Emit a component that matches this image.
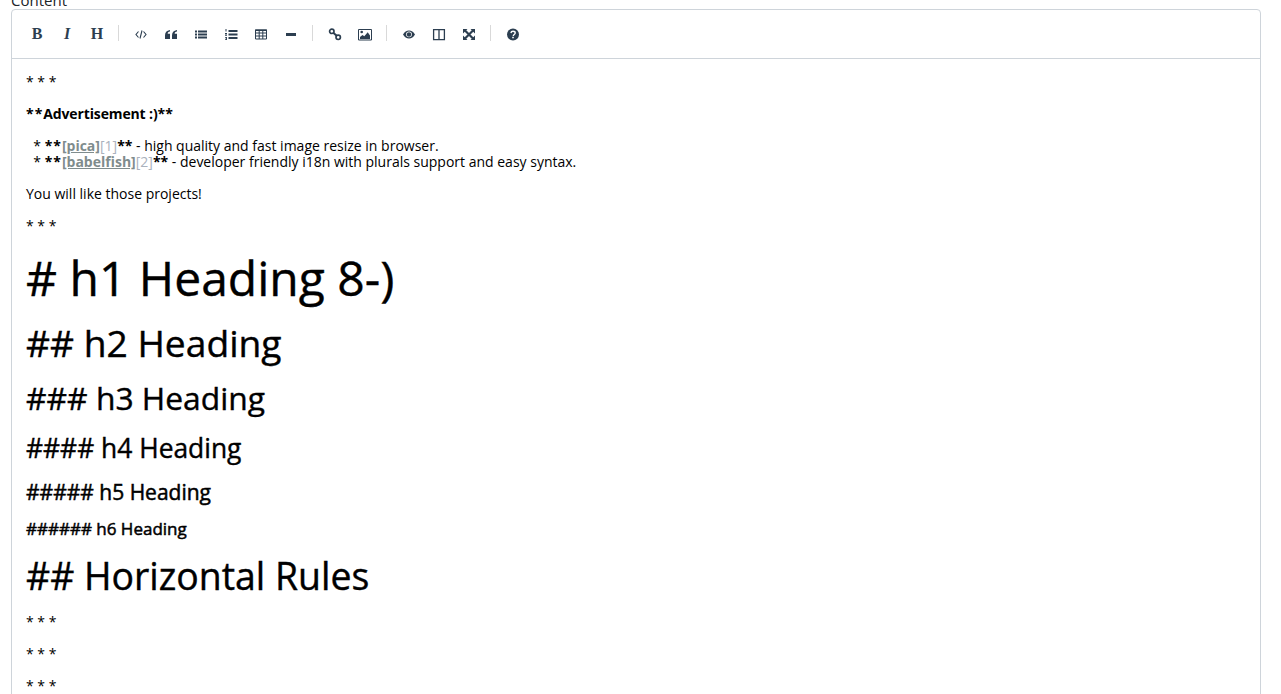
<div class="page">
  <label class="label" for="content">Content</label>
  <div class="editor" id="content">
    <div class="toolbar">
      <span class="btn serif">B</span>
      <span class="btn serif italic">I</span>
      <span class="btn serif">H</span>
      <i class="sep"></i>
      <span class="btn">
        <svg width="14" height="14" viewBox="0 0 14 14"><path d="M4.500 4.500 2 7.500l2.500 3M9.500 4.500l2.500 3-2.500 3M8 3.500 6 11.500" fill="none" stroke="#2c3e50" stroke-width="1.100"/></svg>
      </span>
      <span class="btn">
        <svg width="14" height="14" viewBox="0 0 14 14"><path d="M1 8.500C1 5.500 2.500 3.500 6 3v1.600C4.300 4.900 3.700 5.600 3.700 6.700H6V12H1zM8 8.500C8 5.500 9.500 3.500 13 3v1.600C11.300 4.900 10.700 5.600 10.700 6.700H13V12H8z" fill="#2c3e50"/></svg>
      </span>
      <span class="btn">
        <svg width="14" height="14" viewBox="0 0 14 14"><path d="M1 3.500h2v2H1zM1 6.500h2v2H1zM1 9.500h2v2H1zM4 3.500h9v2H4zM4 6.500h9v2H4zM4 9.500h9v2H4z" fill="#2c3e50"/></svg>
      </span>
      <span class="btn">
        <svg width="14" height="14" viewBox="0 0 14 14"><path d="M1.500 2h1v2.500h-1zM1 6h2v1L2 8h1v.8H1V8l1-1H1zM1 10h2v3H1v-.7h1.200v-.5H1.500v-.6h.7v-.5H1zM4.500 3h9v2h-9zM4.500 6.500h9v2h-9zM4.500 10h9v2h-9z" fill="#2c3e50"/></svg>
      </span>
      <span class="btn">
        <svg width="14" height="14" viewBox="0 0 14 14"><path d="M1.500 3h11v9h-11zM1.500 6h11M1.500 9h11M5.200 3v9M8.800 3v9" fill="none" stroke="#2c3e50" stroke-width="1"/><path d="M1 2.500h12v1.500H1z" fill="#2c3e50"/></svg>
      </span>
      <span class="btn">
        <svg width="14" height="14" viewBox="0 0 14 14"><path d="M2 6h10v3H2z" fill="#2c3e50"/></svg>
      </span>
      <i class="sep"></i>
      <span class="btn">
        <svg width="14" height="14" viewBox="0 0 14 14"><circle cx="3.800" cy="4.300" r="2.200" fill="none" stroke="#2c3e50" stroke-width="1.700"/><circle cx="10.200" cy="10.300" r="2.200" fill="none" stroke="#2c3e50" stroke-width="1.700"/><path d="M5.300 5.800 8.700 8.800" stroke="#2c3e50" stroke-width="2"/></svg>
      </span>
      <span class="btn">
        <svg width="14" height="14" viewBox="0 0 14 14"><path d="M.5 2.500h13v10.500H.5z" fill="none" stroke="#2c3e50" stroke-width="1"/><path d="M2 12v-2l2.500-2 1.800 1.300 3.400-4L12 8.500V12z" fill="#2c3e50"/><circle cx="3.700" cy="5" r="1.300" fill="#2c3e50"/></svg>
      </span>
      <i class="sep"></i>
      <span class="btn">
        <svg width="14" height="14" viewBox="0 0 14 14"><path d="M1 7.500C2.500 5 4.500 3.500 7 3.500s4.500 1.500 6 4C11.500 10 9.500 11.500 7 11.500S2.500 10 1 7.500z" fill="#2c3e50"/><circle cx="7" cy="7.300" r="2.900" fill="#fff"/><circle cx="7" cy="7.500" r="2.200" fill="#2c3e50"/></svg>
      </span>
      <span class="btn">
        <svg width="14" height="14" viewBox="0 0 14 14"><path d="M1.600 2.600h10.800v10H1.600zM7 2.600v10" fill="none" stroke="#2c3e50" stroke-width="1.300"/></svg>
      </span>
      <span class="btn">
        <svg width="14" height="14" viewBox="0 0 14 14"><path d="M3 3.500l8 8M11 3.500l-8 8" stroke="#2c3e50" stroke-width="2.200"/><path d="M1 2h4.500L1 6.500zM13 2v4.500L8.500 2zM1 13V8.500L5.500 13zM13 13H8.500L13 8.500z" fill="#2c3e50"/></svg>
      </span>
      <i class="sep"></i>
      <span class="btn">
        <svg width="14" height="14" viewBox="0 0 14 14"><circle cx="7" cy="7.500" r="6" fill="#2c3e50"/><path d="M4.900 6c.2-1.100 1-1.700 2.100-1.700 1.300 0 2.200.7 2.200 1.700 0 1.600-1.900 1.500-1.900 2.900" fill="none" stroke="#fff" stroke-width="1.400"/><path d="M6.200 9.700h1.600v1.500H6.200z" fill="#fff"/></svg>
      </span>
    </div>
    <div class="content">
      <div class="line">* * *</div>
      <div class="line"></div>
      <div class="line b"><span class="stars">**</span><span class="tight">Advertisement :)</span>**</div>
      <div class="line"></div>
      <div class="line">{'  * '}<b class="stars">**</b><span class="link">[pica]</span><span class="url">[1]</span><b>**</b> - high quality and fast image resize in browser.</div>
      <div class="line">{'  * '}<b class="stars">**</b><span class="link">[babelfish]</span><span class="url">[2]</span><b>**</b> - developer friendly i18n with plurals support and easy syntax.</div>
      <div class="line"></div>
      <div class="line">You will like those projects!</div>
      <div class="line"></div>
      <div class="line">* * *</div>
      <div class="line"></div>
      <div class="line h1"># h1 Heading 8-)</div>
      <div class="line"></div>
      <div class="line h2">## h2 Heading</div>
      <div class="line"></div>
      <div class="line h3">### h3 Heading</div>
      <div class="line"></div>
      <div class="line h4">#### h4 Heading</div>
      <div class="line"></div>
      <div class="line h5">##### h5 Heading</div>
      <div class="line"></div>
      <div class="line h6">###### h6 Heading</div>
      <div class="line"></div>
      <div class="line h2b">## Horizontal Rules</div>
      <div class="line"></div>
      <div class="line">* * *</div>
      <div class="line"></div>
      <div class="line">* * *</div>
      <div class="line"></div>
      <div class="line">* * *</div>
      <div class="line"></div>
    </div>
  </div>
</div>

<style>
  :global(body) {
    margin: 0;
    background: #fff;
    overflow: hidden;
  }

  .page {
    height: 694px;
    overflow: hidden;
    padding: 0 20px 0 11px;
    font-family: "Open Sans", sans-serif;
    font-size: 14px;
    color: #000;
  }

  .label {
    display: block;
    margin-top: -9px;
    height: 18px;
    line-height: 18px;
    font-size: 15px;
    color: #212529;
  }

  .editor {
    border: 1px solid #ced4da;
    border-radius: 4px;
  }

  .toolbar {
    display: flex;
    align-items: center;
    height: 49px;
    box-sizing: border-box;
    padding-left: 10px;
    border-bottom: 1px solid #ced4da;
    color: #2c3e50;
  }

  .btn {
    display: flex;
    align-items: center;
    justify-content: center;
    width: 30px;
    height: 30px;
  }

  .serif {
    font-family: "Liberation Serif", serif;
    font-size: 16px;
    font-weight: 700;
  }

  .italic {
    font-style: italic;
  }

  .sep {
    display: block;
    width: 1px;
    height: 16px;
    margin: 0 7px 0 6px;
    background: #d9d9d9;
    position: relative;
    top: -1px;
  }

  .content {
    padding: 15px 14px 0;
  }

  .line {
    min-height: 16px;
    line-height: 16px;
    white-space: pre;
  }

  b, .b {
    font-weight: 700;
  }

  .stars {
    letter-spacing: 1px;
  }

  .tight {
    letter-spacing: -0.13px;
  }

  .link {
    color: #7f8c8d;
    font-weight: 700;
    text-decoration: underline;
  }

  .url {
    color: #aab2bd;
  }

  .h1, .h2, .h3, .h4, .h2b {
    -webkit-text-stroke: 0.4px #000;
  }

  .h5, .h6 {
    -webkit-text-stroke: 0.5px #000;
  }

  .h1 { font-size: 48px; line-height: 56px; }
  .h2 { font-size: 37.2px; line-height: 42px; }
  .h3 { font-size: 31.8px; line-height: 36px; }
  .h4 { font-size: 26.4px; line-height: 32px; }
  .h5 { font-size: 21px; line-height: 24px; }
  .h6 { font-size: 17px; line-height: 18px; }
  .h2b { font-size: 37.4px; line-height: 44px; }
</style>
